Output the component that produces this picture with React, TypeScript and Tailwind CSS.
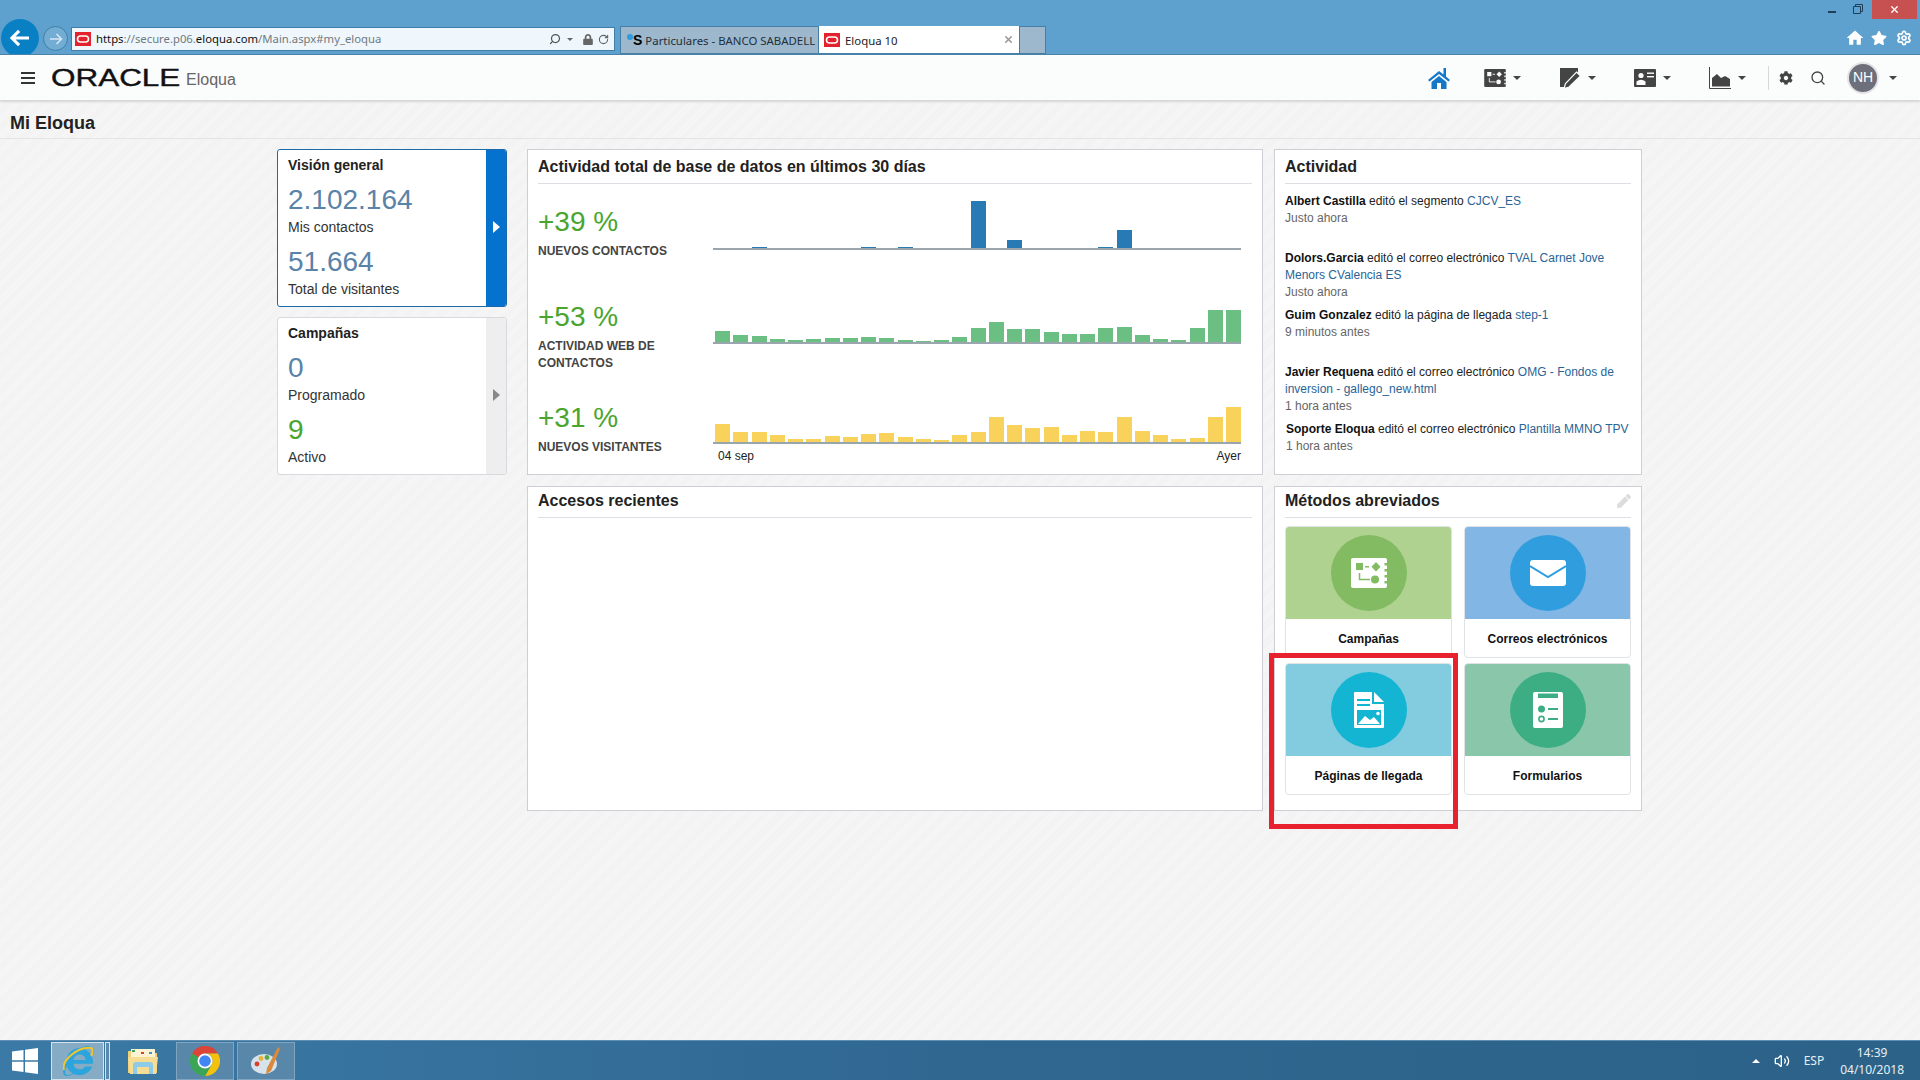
import { RotateCw, Search, Settings, Volume2, X } from 'lucide-react';
import { FaCog, FaInternetExplorer, FaLock, FaPen, FaStar } from 'react-icons/fa';
import { MdHome } from 'react-icons/md';

const greenBars = [11, 7, 6, 3, 2, 3, 4, 4, 5, 4, 2, 1, 2, 5, 14, 20, 13, 13, 10, 8, 8, 14, 15, 7, 3, 2, 14, 32, 32];
const yellowBars = [18, 10, 10, 7, 3, 3, 6, 5, 8, 9, 5, 3, 2, 7, 10, 25, 17, 14, 15, 7, 11, 10, 25, 11, 7, 3, 4, 25, 35];
const blueBars = [0, 0, 1, 0, 0, 0, 0, 0, 1, 0, 1, 0, 0, 0, 47, 0, 8, 0, 0, 0, 0, 1, 18, 0, 0, 0, 0, 0, 0];

const activity = [
  { who: 'Albert Castilla', what: ' editó el segmento ', link: ['CJCV_ES'], when: 'Justo ahora' },
  { who: 'Dolors.Garcia', what: ' editó el correo electrónico ', link: ['TVAL Carnet Jove', 'Menors CValencia ES'], when: 'Justo ahora' },
  { who: 'Guim Gonzalez', what: ' editó la página de llegada ', link: ['step-1'], when: '9 minutos antes' },
  { who: 'Javier Requena', what: ' editó el correo electrónico ', link: ['OMG - Fondos de', 'inversion - gallego_new.html'], when: '1 hora antes' },
  { who: 'Soporte Eloqua', what: ' editó el correo electrónico ', link: ['Plantilla MMNO TPV'], when: '1 hora antes' },
];

function Caret() {
  return <span className="ml-[7px] mt-[1px] h-0 w-0 border-x-[4px] border-t-[4px] border-x-transparent border-t-[#444]" />;
}

function OracleMark() {
  return (
    <svg viewBox="0 0 16 14" className="h-[14px] w-[16px] shrink-0">
      <rect width="16" height="14" fill="#e2232e" />
      <rect x="2.5" y="4" width="11" height="6" rx="3" fill="none" stroke="#fff" strokeWidth="1.6" />
    </svg>
  );
}

function CampaignIcon({ fg, bg, className }: { fg: string; bg: string; className: string }) {
  return (
    <svg viewBox="0 0 36 30" className={className}>
      <rect width="36" height="30" rx="2" fill={fg} />
      {[5, 11, 17, 23].map((y) => (
        <rect key={y} x="33.5" y={y} width="2.5" height="2.5" fill={bg} />
      ))}
      <rect x="5" y="5" width="7" height="7" fill={bg} />
      <rect x="14" y="8" width="4" height="1.5" fill={bg} />
      <path d="M25 4 L29.5 8.7 L25 13.4 L20.5 8.7 Z" fill={bg} />
      <path d="M8.5 15 V21.5 H19" fill="none" stroke={bg} strokeWidth="1.5" />
      <circle cx="24" cy="21.5" r="4" fill={bg} />
    </svg>
  );
}

function MailIcon({ bg }: { bg: string }) {
  return (
    <svg viewBox="0 0 36 26" className="h-[26px] w-[36px]">
      <rect width="36" height="26" rx="3" fill="#fff" />
      <path d="M0 6 L18 17 L36 6" fill="none" stroke={bg} strokeWidth="2" />
    </svg>
  );
}

function PageIcon({ bg }: { bg: string }) {
  return (
    <svg viewBox="0 0 30 36" className="h-[36px] w-[30px]">
      <path d="M1 0 H18 V12 H30 V35 a1 1 0 0 1 -1 1 H1 a1 1 0 0 1 -1 -1 V1 a1 1 0 0 1 1 -1 Z" fill="#fff" />
      <path d="M20 0 L30 10 H20 Z" fill="#fff" />
      <rect x="3" y="7" width="13" height="2" fill={bg} />
      <rect x="3" y="12" width="13" height="2" fill={bg} />
      <rect x="3" y="18" width="24" height="15" fill={bg} />
      <path d="M4 32 L11 24 L16 28 L20 25 L26 32 Z" fill="#fff" />
      <circle cx="24" cy="21.5" r="1.8" fill="#fff" />
    </svg>
  );
}

function FormIcon({ bg }: { bg: string }) {
  return (
    <svg viewBox="0 0 30 36" className="h-[36px] w-[30px]">
      <rect width="30" height="36" rx="2" fill="#fff" />
      <rect x="5" y="1" width="20" height="5" fill={bg} />
      <rect x="5" y="0" width="20" height="1.5" fill="#fff" />
      <circle cx="8.5" cy="17" r="3.5" fill={bg} />
      <rect x="15" y="16" width="10" height="2" fill={bg} />
      <circle cx="8.5" cy="27" r="2.6" fill="none" stroke={bg} strokeWidth="1.6" />
      <rect x="15" y="26" width="10" height="2" fill={bg} />
    </svg>
  );
}

function TitleBar() {
  return (
    <div className="flex h-[55px] flex-col overflow-hidden border-b border-[#4a82a8] bg-[#5fa1ce]">
      <div className="flex h-[19px] items-start justify-end pr-[3px]">
        <span className="mr-[17px] mt-[11px] h-[2px] w-[8px] bg-[#1d3f58]" />
        <svg viewBox="0 0 10 10" className="mr-[9px] mt-[4px] h-[10px] w-[10px]">
          <path d="M2.5 2.5 V0.5 H9.5 V7.5 H7.5 M0.5 2.5 H7.5 V9.5 H0.5 Z" fill="none" stroke="#1d3f58" strokeWidth="1" />
        </svg>
        <div className="flex h-[19px] w-[45px] items-center justify-center bg-[#c75050]">
          <X className="h-[11px] w-[11px] text-white" strokeWidth={3} />
        </div>
      </div>
      <div className="flex h-[36px] items-start">
        <div className="ml-[1px] flex h-[38px] w-[38px] shrink-0 items-center justify-center rounded-full bg-[#0a80c4]">
          <svg viewBox="0 0 22 20" className="h-[18px] w-[20px]">
            <path d="M10 2 L2 10 L10 18 M2.5 10 H21" fill="none" stroke="#fff" strokeWidth="3.4" />
          </svg>
        </div>
        <div className="ml-[4px] mt-[7px] flex h-[25px] w-[25px] shrink-0 items-center justify-center rounded-full border border-[#3f7ea6] bg-[#74add4]">
          <svg viewBox="0 0 14 12" className="h-[12px] w-[14px]">
            <path d="M7.5 1 L12.5 6 L7.5 11 M12 6 H1" fill="none" stroke="#d5e6f2" strokeWidth="1.6" />
          </svg>
        </div>
        <div className="ml-[3px] mt-[8px] flex h-[24px] w-[544px] shrink-0 items-center border border-[#3f7ea6] bg-[#eff7fc] pl-[3px] pr-[5px]">
          <OracleMark />
          <span className="ml-[5px] mt-[1px] font-['Noto_Sans',sans-serif] text-[11.3px] text-[#6f7a80]">
            <span className="text-[#111]">https</span>://secure.p06.<span className="text-[#111]">eloqua.com</span>/Main.aspx#my_eloqua
          </span>
          <Search className="ml-auto h-[12px] w-[12px] -scale-x-100 text-[#555]" strokeWidth={2.5} />
          <span className="ml-[6px] h-0 w-0 border-x-[3px] border-t-[3px] border-x-transparent border-t-[#666]" />
          <FaLock className="ml-[10px] h-[11px] w-[10px] text-[#666]" />
          <RotateCw className="ml-[5px] h-[11px] w-[11px] text-[#666]" strokeWidth={2.5} />
        </div>
        <div className="ml-[5px] mt-[7px] flex h-[28px] shrink-0 font-['Noto_Sans',sans-serif] text-[11.4px]">
          <div className="flex w-[199px] items-center border border-[#457ea6] bg-[#9db8cc] pl-[6px] text-[#1f2f3a]">
            <span className="mb-[6px] h-[6px] w-[6px] shrink-0 rounded-full bg-[#2f9be0]" />
            <span className="mr-[3px] font-['Liberation_Sans',sans-serif] text-[14px] font-bold leading-none text-black">S</span>
            <span className="mt-[2px] whitespace-nowrap">Particulares - BANCO SABADELL</span>
          </div>
          <div className="flex w-[200px] items-center border-b border-[#457ea6] bg-white pl-[5px] pr-[5px] text-[#222]">
            <OracleMark />
            <span className="ml-[5px] mt-[2px]">Eloqua 10</span>
            <X className="ml-auto h-[11px] w-[11px] text-[#9a9a9a]" strokeWidth={3.5} />
          </div>
          <div className="w-[27px] border border-[#457ea6] bg-[#9db8cc]" />
        </div>
        <div className="ml-auto mt-[9px] flex items-center gap-[6px] pr-[8px] text-white">
          <MdHome className="h-[20px] w-[20px]" />
          <FaStar className="h-[16px] w-[16px]" />
          <Settings className="ml-[3px] h-[16px] w-[16px]" strokeWidth={2.6} />
        </div>
      </div>
    </div>
  );
}

function NavBar() {
  return (
    <div className="z-10 flex h-[45px] items-center bg-[#fbfcfc] shadow-[0_2px_2px_#d5d5d5]">
      <div className="ml-[21px] flex h-[12px] w-[14px] flex-col justify-between">
        <span className="h-[2px] bg-[#333]" />
        <span className="h-[2px] bg-[#333]" />
        <span className="h-[2px] bg-[#333]" />
      </div>
      <div className="ml-[16px] w-[129px]">
        <span className="block origin-left scale-x-[1.31] text-[24px] leading-[24px] text-[#111] [-webkit-text-stroke:0.4px_#111]">ORACLE</span>
      </div>
      <span className="ml-[6px] mt-[4px] text-[16px] text-[#666]">Eloqua</span>
      <div className="ml-auto flex items-center">
        <svg viewBox="0 0 22 22" className="h-[22px] w-[22px]">
          <path d="M11 4 L0 13 L1.5 14.5 L11 7 L20.5 14.5 L22 13 L18 9.5 V1 H15.5 V7.5 Z" fill="#1577c8" />
          <path d="M3.5 15 L11 9 L18.5 15 V22 H13 V16 H9 V22 H3.5 Z" fill="#1577c8" />
        </svg>
        <div className="ml-[34px] flex items-center">
          <CampaignIcon fg="#444" bg="#fbfcfc" className="h-[18px] w-[22px]" />
          <Caret />
        </div>
        <div className="ml-[38px] flex items-center">
          <svg viewBox="0 0 22 22" className="h-[22px] w-[22px]">
            <path d="M1 1 H19 V5 L8 16 L6 20 H1 Z" fill="#444" />
            <path d="M17.5 5 L21.5 9 L10 20 L5 21.5 L6.5 16.5 Z" fill="#444" stroke="#fbfcfc" strokeWidth="1.2" />
          </svg>
          <Caret />
        </div>
        <div className="ml-[38px] flex items-center">
          <svg viewBox="0 0 22 18" className="h-[18px] w-[22px]">
            <rect width="22" height="18" rx="1" fill="#444" />
            <circle cx="7" cy="6.5" r="2.6" fill="#fff" />
            <path d="M2.5 16 V12.5 Q7 9 11.5 12.5 V16 Z" fill="#fff" />
            <rect x="13" y="3.5" width="7" height="1.4" fill="#fff" />
            <rect x="13" y="7" width="7" height="1.4" fill="#fff" />
          </svg>
          <Caret />
        </div>
        <div className="ml-[38px] flex items-center">
          <svg viewBox="0 0 22 22" className="h-[22px] w-[22px]">
            <path d="M0.5 0 V21.5 H22" fill="none" stroke="#444" strokeWidth="1" />
            <path d="M3 19.5 V11 L8 7 L12 11 L16 9 L21 12 V19.5 Z" fill="#444" />
          </svg>
          <Caret />
        </div>
        <span className="ml-[22px] h-[24px] w-px bg-[#d8d8d8]" />
        <FaCog className="ml-[10px] h-[14px] w-[14px] text-[#444]" />
        <Search className="ml-[17px] h-[16px] w-[16px] text-[#444]" strokeWidth={2} />
        <div className="ml-[21px] flex h-[32px] w-[32px] items-center justify-center rounded-full border-2 border-[#e4e4e6] bg-[#6d6f7b] text-[14px] text-white">NH</div>
        <span className="ml-[10px] mr-[23px] h-0 w-0 border-x-[4px] border-t-[4px] border-x-transparent border-t-[#444]" />
      </div>
    </div>
  );
}

function SummaryCard({ title, active, children }: { title: string; active?: boolean; children: React.ReactNode }) {
  return (
    <div className={`flex h-[158px] overflow-hidden rounded-[3px] border bg-white ${active ? 'border-[#1a6aa8]' : 'border-[#d6dade]'}`}>
      <div className="flex-1 pl-[10px] pt-[7px]">
        <div className="text-[14px] font-bold leading-[17px] text-[#222]">{title}</div>
        {children}
      </div>
      <div className={`flex w-[20px] items-center justify-center ${active ? 'bg-[#0572ce]' : 'bg-[#eeeeee]'}`}>
        <span className={`mb-[3px] ml-[1px] h-0 w-0 border-y-[6px] border-l-[7px] border-y-transparent ${active ? 'border-l-white' : 'border-l-[#888]'}`} />
      </div>
    </div>
  );
}

function Stat({ value, label, green }: { value: string; label: string; green?: boolean }) {
  return (
    <div className="mt-[9px]">
      <div className={`text-[28px] leading-[34px] ${green ? 'text-[#4aa52e]' : 'text-[#5a83a8]'}`}>{value}</div>
      <div className="mt-[2px] text-[14px] leading-[17px] text-[#333]">{label}</div>
    </div>
  );
}

function Panel({ title, action, short, children }: { title: string; action?: React.ReactNode; short?: boolean; children?: React.ReactNode }) {
  return (
    <div className="border border-[#ccd0d6] bg-white px-[10px]">
      <div className={`flex items-center justify-between border-b border-[#dcdfe3] text-[16px] font-bold text-[#222] ${short ? 'h-[31px] pb-[2px]' : 'h-[34px]'}`}>
        <span>{title}</span>
        {action}
      </div>
      {children}
    </div>
  );
}

function Chart({ bars, color, height, className = '' }: { bars: number[]; color: string; height: string; className?: string }) {
  return (
    <div className={`flex items-end justify-between border-b-2 border-[#9aa5ae] pl-[2px] ${height} ${className}`}>
      {bars.map((h, i) => (
        <span key={i} className="w-[15px]" style={{ height: h, backgroundColor: color }} />
      ))}
    </div>
  );
}

function Metric({ pct, label, children, className }: { pct: string; label: React.ReactNode; children: React.ReactNode; className: string }) {
  return (
    <div className={`flex ${className}`}>
      <div className="w-[175px] shrink-0">
        <div className="text-[28px] leading-[34px] text-[#4aa52e]">{pct}</div>
        <div className="mt-[4px] text-[12px] font-bold leading-[17px] text-[#444]">{label}</div>
      </div>
      <div className="w-[528px]">{children}</div>
    </div>
  );
}

function Tile({ label, light, dark, icon, marked }: { label: string; light: string; dark: string; icon: React.ReactNode; marked?: boolean }) {
  return (
    <div className="relative flex h-[132px] flex-col rounded-[4px] border border-[#dfe3e6]">
      <div className="flex h-[92px] items-center justify-center rounded-t-[3px]" style={{ backgroundColor: light }}>
        <div className="flex h-[76px] w-[76px] items-center justify-center rounded-full" style={{ backgroundColor: dark }}>
          {icon}
        </div>
      </div>
      <div className="flex-1 pb-[1px] pt-[12px] text-center text-[12px] font-bold leading-[17px] text-[#111]">{label}</div>
      {marked && <div className="absolute -left-[17px] -top-[11px] h-[176px] w-[189px] border-[5px] border-[#e7212e]" />}
    </div>
  );
}

function Dashboard() {
  return (
    <div className="flex pl-[277px] pt-[10px]">
      <div className="flex w-[230px] flex-col gap-[10px]">
        <SummaryCard title="Visión general" active>
          <Stat value="2.102.164" label="Mis contactos" />
          <Stat value="51.664" label="Total de visitantes" />
        </SummaryCard>
        <SummaryCard title="Campañas">
          <Stat value="0" label="Programado" />
          <Stat value="9" label="Activo" green />
        </SummaryCard>
      </div>
      <div className="ml-[20px] grid grid-cols-[736px_368px] grid-rows-[326px_325px] gap-x-[11px] gap-y-[11px]">
        <Panel title="Actividad total de base de datos en últimos 30 días">
          <Metric pct="+39 %" label="NUEVOS CONTACTOS" className="mt-[21px]">
            <Chart bars={blueBars} color="#277ab3" height="h-[50px]" className="-mt-[5px]" />
          </Metric>
          <Metric pct="+53 %" label={<>ACTIVIDAD WEB DE<br />CONTACTOS</>} className="mt-[40px]">
            <Chart bars={greenBars} color="#6bbf83" height="h-[44px]" />
          </Metric>
          <Metric pct="+31 %" label="NUEVOS VISITANTES" className="mt-[29px]">
            <Chart bars={yellowBars} color="#f9d25c" height="h-[43px]" />
            <div className="mt-[4px] flex justify-between pl-[5px] text-[12px] leading-[17px] text-[#222]">
              <span>04 sep</span>
              <span>Ayer</span>
            </div>
          </Metric>
        </Panel>
        <Panel title="Actividad">
          <div className="pt-[9px]">
            {activity.map((a, i) => (
              <div key={i} className={`mb-[6px] min-h-[51px] text-[12px] leading-[17px] ${i === 4 ? 'pl-[1px]' : ''}`}>
                <b className="text-[#111]">{a.who}</b>
                <span className="text-[#222]">{a.what}</span>
                <span className="text-[#2a6496]">{a.link[0]}</span>
                {a.link[1] && <div className="text-[#2a6496]">{a.link[1]}</div>}
                <div className="text-[#666]">{a.when}</div>
              </div>
            ))}
          </div>
        </Panel>
        <Panel title="Accesos recientes" short />
        <Panel title="Métodos abreviados" short action={<FaPen className="h-[14px] w-[14px] text-[#dcdcdc]" />}>
          <div className="grid grid-cols-[167px_167px] gap-x-[12px] gap-y-[5px] pt-[8px]">
            <Tile label="Campañas" light="#afd291" dark="#82bb62" icon={<CampaignIcon fg="#fff" bg="#82bb62" className="h-[30px] w-[36px]" />} />
            <Tile label="Correos electrónicos" light="#82b6e4" dark="#309ede" icon={<MailIcon bg="#309ede" />} />
            <Tile label="Páginas de llegada" light="#83cbdf" dark="#14b5d2" icon={<PageIcon bg="#14b5d2" />} marked />
            <Tile label="Formularios" light="#8ac6a9" dark="#3dae84" icon={<FormIcon bg="#3dae84" />} />
          </div>
        </Panel>
      </div>
    </div>
  );
}

function Taskbar() {
  return (
    <div className="mt-auto flex h-[40px] items-center border-t border-[#5f90b4] bg-[linear-gradient(90deg,#3b7aa6,#2f6791_50%,#2c6288)] text-white">
      <svg viewBox="0 0 26 26" className="ml-[12px] h-[26px] w-[26px]">
        <path d="M0 3.5 L11.5 2 V12.3 H0 Z M13 1.7 L26 0 V12.3 H13 Z M0 13.7 H11.5 V24 L0 22.5 Z M13 13.7 H26 V26 L13 24.3 Z" fill="#fff" />
      </svg>
      <div className="ml-[13px] flex h-[38px] w-[53px] items-center justify-center border border-[#d5e3ee] bg-[#86abc4]">
        <div className="relative h-[30px] w-[30px]">
          <FaInternetExplorer className="h-[30px] w-[30px] text-[#2ba5dc]" />
          <svg viewBox="0 0 30 30" className="absolute inset-0 h-[30px] w-[30px]">
            <path d="M1 24 C-2 14 16 0 28 2 C30 3 30 7 28 10" fill="none" stroke="#f0c52e" strokeWidth="2" />
          </svg>
        </div>
      </div>
      <span className="ml-[1px] h-[38px] w-[5px] border border-[#d5e3ee] bg-[#5b8aac]" />
      <svg viewBox="0 0 32 28" className="ml-[17px] h-[28px] w-[32px]">
        <path d="M1 4 H13 L15 6 H30 V26 H1 Z" fill="#f0cf7a" />
        <rect x="4" y="2" width="24" height="8" fill="#fbf3d2" />
        <rect x="5" y="3" width="3" height="2" fill="#3aa655" />
        <rect x="14" y="5" width="3" height="2" fill="#d8412f" />
        <rect x="22" y="5" width="3" height="2" fill="#3f8fd8" />
        <path d="M1 10 H31 L29 27 H3 Z" fill="#f6dd93" />
        <path d="M6 27 V18 Q6 15 9 15 H23 Q26 15 26 18 V27 H22 V20 H10 V27 Z" fill="#8ecbe6" />
      </svg>
      <div className="ml-[17px] flex h-[38px] w-[58px] items-center justify-center border border-[#7fa5c0] bg-[#5887aa]">
        <svg viewBox="0 0 30 30" className="h-[30px] w-[30px]">
          <path d="M2 7.5 A15 15 0 0 1 28 7.5 L15 7.5 A7.5 7.5 0 0 0 8.5 11.25 Z" fill="#db4437" />
          <path d="M28 7.5 A15 15 0 0 1 15 30 L21.5 18.75 A7.5 7.5 0 0 0 15 7.5 Z" fill="#f4c20d" />
          <path d="M15 30 A15 15 0 0 1 2 7.5 L8.5 11.25 A7.5 7.5 0 0 0 21.5 18.75 Z" fill="#3aa655" />
          <circle cx="15" cy="15" r="7.5" fill="#fff" />
          <circle cx="15" cy="15" r="5.8" fill="#4285f4" />
        </svg>
      </div>
      <div className="ml-[3px] flex h-[38px] w-[58px] items-center justify-center border border-[#7fa5c0] bg-[#5887aa]">
        <svg viewBox="0 0 30 30" className="h-[30px] w-[30px]">
          <ellipse cx="13" cy="18" rx="13" ry="10" fill="#d7e3ea" />
          <circle cx="6" cy="18" r="2.4" fill="#d8412f" />
          <circle cx="10" cy="12.5" r="2.4" fill="#e9b23a" />
          <circle cx="16" cy="11.5" r="2.4" fill="#5aa846" />
          <path d="M27 1 L29 3 L20 25 L15 28 L16 22 Z" fill="#d98a3d" />
        </svg>
      </div>
      <div className="ml-auto flex items-center text-[12px] text-[#e6f0f6]">
        <span className="h-0 w-0 border-x-[4px] border-b-[4px] border-x-transparent border-b-white" />
        <Volume2 className="ml-[14px] h-[16px] w-[16px] text-white" />
        <span className="ml-[14px] font-['Noto_Sans',sans-serif]">ESP</span>
        <div className="ml-[16px] mr-[16px] text-center font-['Noto_Sans',sans-serif] text-[12px] leading-[17px]">
          <div>14:39</div>
          <div>04/10/2018</div>
        </div>
      </div>
    </div>
  );
}

export default function App() {
  return (
    <div className="relative flex h-[1080px] w-[1920px] flex-col overflow-hidden bg-[repeating-linear-gradient(135deg,#f7f7f7_0,#f7f7f7_1px,#f1f1f1_1px,#f1f1f1_2px)] font-['Liberation_Sans',Arial,sans-serif]">
      <TitleBar />
      <NavBar />
      <div className="flex h-[39px] items-center border-b border-[#e4e4e4] pl-[10px] pt-[9px] text-[18px] font-bold text-[#222]">Mi Eloqua</div>
      <Dashboard />
      <Taskbar />
    </div>
  );
}
